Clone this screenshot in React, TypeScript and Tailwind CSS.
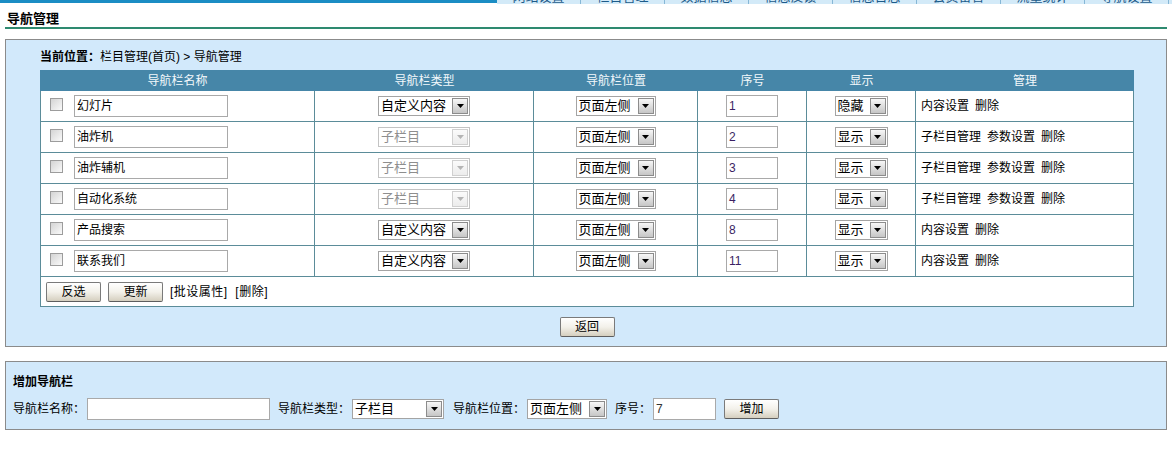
import React from 'react';

const FONT = '"Liberation Sans", "Noto Sans CJK SC", sans-serif';

interface NavRow {
  name: string;
  type: string;
  sub: boolean;
  seq: string;
  show: string;
  ops: string[];
}

const rows: NavRow[] = [
  { name: '幻灯片', type: '自定义内容', sub: false, seq: '1', show: '隐藏', ops: ['内容设置', '删除'] },
  { name: '油炸机', type: '子栏目', sub: true, seq: '2', show: '显示', ops: ['子栏目管理', '参数设置', '删除'] },
  { name: '油炸辅机', type: '子栏目', sub: true, seq: '3', show: '显示', ops: ['子栏目管理', '参数设置', '删除'] },
  { name: '自动化系统', type: '子栏目', sub: true, seq: '4', show: '显示', ops: ['子栏目管理', '参数设置', '删除'] },
  { name: '产品搜索', type: '自定义内容', sub: false, seq: '8', show: '显示', ops: ['内容设置', '删除'] },
  { name: '联系我们', type: '自定义内容', sub: false, seq: '11', show: '显示', ops: ['内容设置', '删除'] },
];

const tabs = ['网站设置', '栏目管理', '数据信息', '信息反馈', '信息日志', '会员留言', '流量统计', '导航设置'];

function Select({ value, width, disabled = false }: { value: string; width: string; disabled?: boolean }) {
  return (
    <div
      className={`flex h-[20px] ${width} items-stretch border bg-white ${
        disabled ? 'border-[#c3c3c3] text-[#8e8e8e]' : 'border-[#a4a4a4] text-black'
      }`}
    >
      <span className="flex-1 overflow-hidden whitespace-nowrap pl-[2px] text-[13px] leading-[18px]">{value}</span>
      <span
        className={`m-[1px] flex w-[16px] items-center justify-center border bg-gradient-to-b ${
          disabled ? 'border-[#d0d0d0] from-[#fbfbfb] to-[#ececec]' : 'border-[#8c8c8c] from-[#f7f7f7] to-[#c6c6c6]'
        }`}
      >
        <svg width="7" height="4" viewBox="0 0 7 4">
          <path d="M0 0 H7 L3.5 4 Z" fill={disabled ? '#b4b4b4' : '#000'} />
        </svg>
      </span>
    </div>
  );
}

function TextBox({ value = '', width, tone = 'text-black' }: { value?: string; width: string; tone?: string }) {
  return (
    <div className={`h-[22px] ${width} border border-[#a9a9a9] bg-white pl-[2px] text-[12px] leading-[20px] ${tone}`}>
      {value}
    </div>
  );
}

function Btn({ label, width = 'w-[55px]' }: { label: string; width?: string }) {
  return (
    <div
      className={`flex h-[20px] ${width} items-center justify-center rounded-[2px] border border-[#7a7a7a] border-b-[#5e5e5e] bg-gradient-to-b from-[#ffffff] via-[#f3f1ea] to-[#d5cfbf] text-[12px] leading-[18px]`}
    >
      {label}
    </div>
  );
}

function Check() {
  return <div className="mb-[3px] h-[13px] w-[13px] border border-[#9c9c9c] bg-gradient-to-br from-[#d4d4d4] to-[#fafafa]" />;
}

export default function App() {
  return (
    <div className="relative h-[454px] w-[1172px] overflow-hidden bg-white text-[12px] text-black" style={{ fontFamily: FONT }}>
      {/* 顶部导航（被截断） */}
      <div className="flex h-[4px]">
        <div className="h-[3px] w-[497px] bg-[#1b8dc4]" />
        <div className="flex h-[4px] flex-1 overflow-hidden bg-[#d3eaf8]">
          {tabs.map((t) => (
            <div key={t} className="w-[84px] shrink-0 border-r border-[#86b7d6] text-center">
              <div className="-mt-[9px] text-[13px] leading-[12px] text-[#1d5b8a]">{t}</div>
            </div>
          ))}
        </div>
      </div>

      {/* 标题 */}
      <div className="pl-[7px] pt-[7px] text-[13px] font-bold leading-[16px]">导航管理</div>
      <div className="mx-[5px] h-[2px] bg-[#2e8a70]" />

      {/* 导航列表 */}
      <div className="mx-[5px] mt-[10px] h-[308px] border border-[#8b8b8b] bg-[#d2e9fb] pl-[34px]">
        <div className="pt-[9px] leading-[16px]">
          <span className="font-bold">当前位置：</span>栏目管理(首页) &gt; 导航管理
        </div>

        <div className="mt-[5px] w-[1094px]">
          <div className="flex h-[21px] items-center bg-[#4686a8] text-[12px] text-[#f2f8fb]">
            <div className="w-[275px] text-center">导航栏名称</div>
            <div className="w-[219px] text-center">导航栏类型</div>
            <div className="w-[164px] text-center">导航栏位置</div>
            <div className="w-[109px] text-center">序号</div>
            <div className="w-[109px] text-center">显示</div>
            <div className="w-[218px] text-center">管理</div>
          </div>

          <div className="border-l border-[#5b8c99] bg-white">
            {rows.map((r) => (
              <div key={r.name} className="flex h-[31px] border-b border-[#5b8c99]">
                <div className="flex w-[274px] items-center border-r border-[#5b8c99] pl-[9px]">
                  <Check />
                  <div className="ml-[11px]">
                    <TextBox value={r.name} width="w-[154px]" />
                  </div>
                </div>
                <div className="flex w-[219px] items-center justify-center border-r border-[#5b8c99]">
                  <Select value={r.type} width="w-[92px]" disabled={r.sub} />
                </div>
                <div className="flex w-[164px] items-center justify-center border-r border-[#5b8c99]">
                  <Select value="页面左侧" width="w-[80px]" />
                </div>
                <div className="flex w-[109px] items-center justify-center border-r border-[#5b8c99]">
                  <TextBox value={r.seq} width="w-[52px]" tone="text-[#3b1f63]" />
                </div>
                <div className="flex w-[109px] items-center justify-center border-r border-[#5b8c99]">
                  <Select value={r.show} width="w-[53px]" />
                </div>
                <div className="flex w-[218px] items-center border-r border-[#5b8c99] pl-[5px]">
                  {r.ops.map((o) => (
                    <span key={o} className="mr-[6px]">
                      {o}
                    </span>
                  ))}
                </div>
              </div>
            ))}

            <div className="flex h-[30px] items-center gap-[7px] border-b border-r border-[#5b8c99] pl-[5px]">
              <Btn label="反选" />
              <Btn label="更新" />
              <span className="tracking-[0.5px]">[批设属性]&nbsp;&nbsp;[删除]</span>
            </div>
          </div>
        </div>

        <div className="mt-[10px] flex w-[1094px] justify-center">
          <Btn label="返回" />
        </div>
      </div>

      {/* 增加导航栏 */}
      <div className="mx-[5px] mt-[14px] h-[69px] border border-[#8b8b8b] bg-[#d2e9fb] pl-[7px]">
        <div className="pt-[12px] font-bold leading-[16px]">增加导航栏</div>
        <div className="mt-[8px] flex h-[22px] items-center">
          <span className="mr-[2px]">导航栏名称：</span>
          <TextBox width="w-[183px]" />
          <span className="ml-[8px] mr-[2px]">导航栏类型：</span>
          <Select value="子栏目" width="w-[92px]" />
          <span className="ml-[9px] mr-[2px]">导航栏位置：</span>
          <Select value="页面左侧" width="w-[80px]" />
          <span className="ml-[8px] mr-[2px]">序号：</span>
          <TextBox value="7" width="w-[63px]" tone="text-[#333]" />
          <div className="ml-[8px]">
            <Btn label="增加" />
          </div>
        </div>
      </div>
    </div>
  );
}
